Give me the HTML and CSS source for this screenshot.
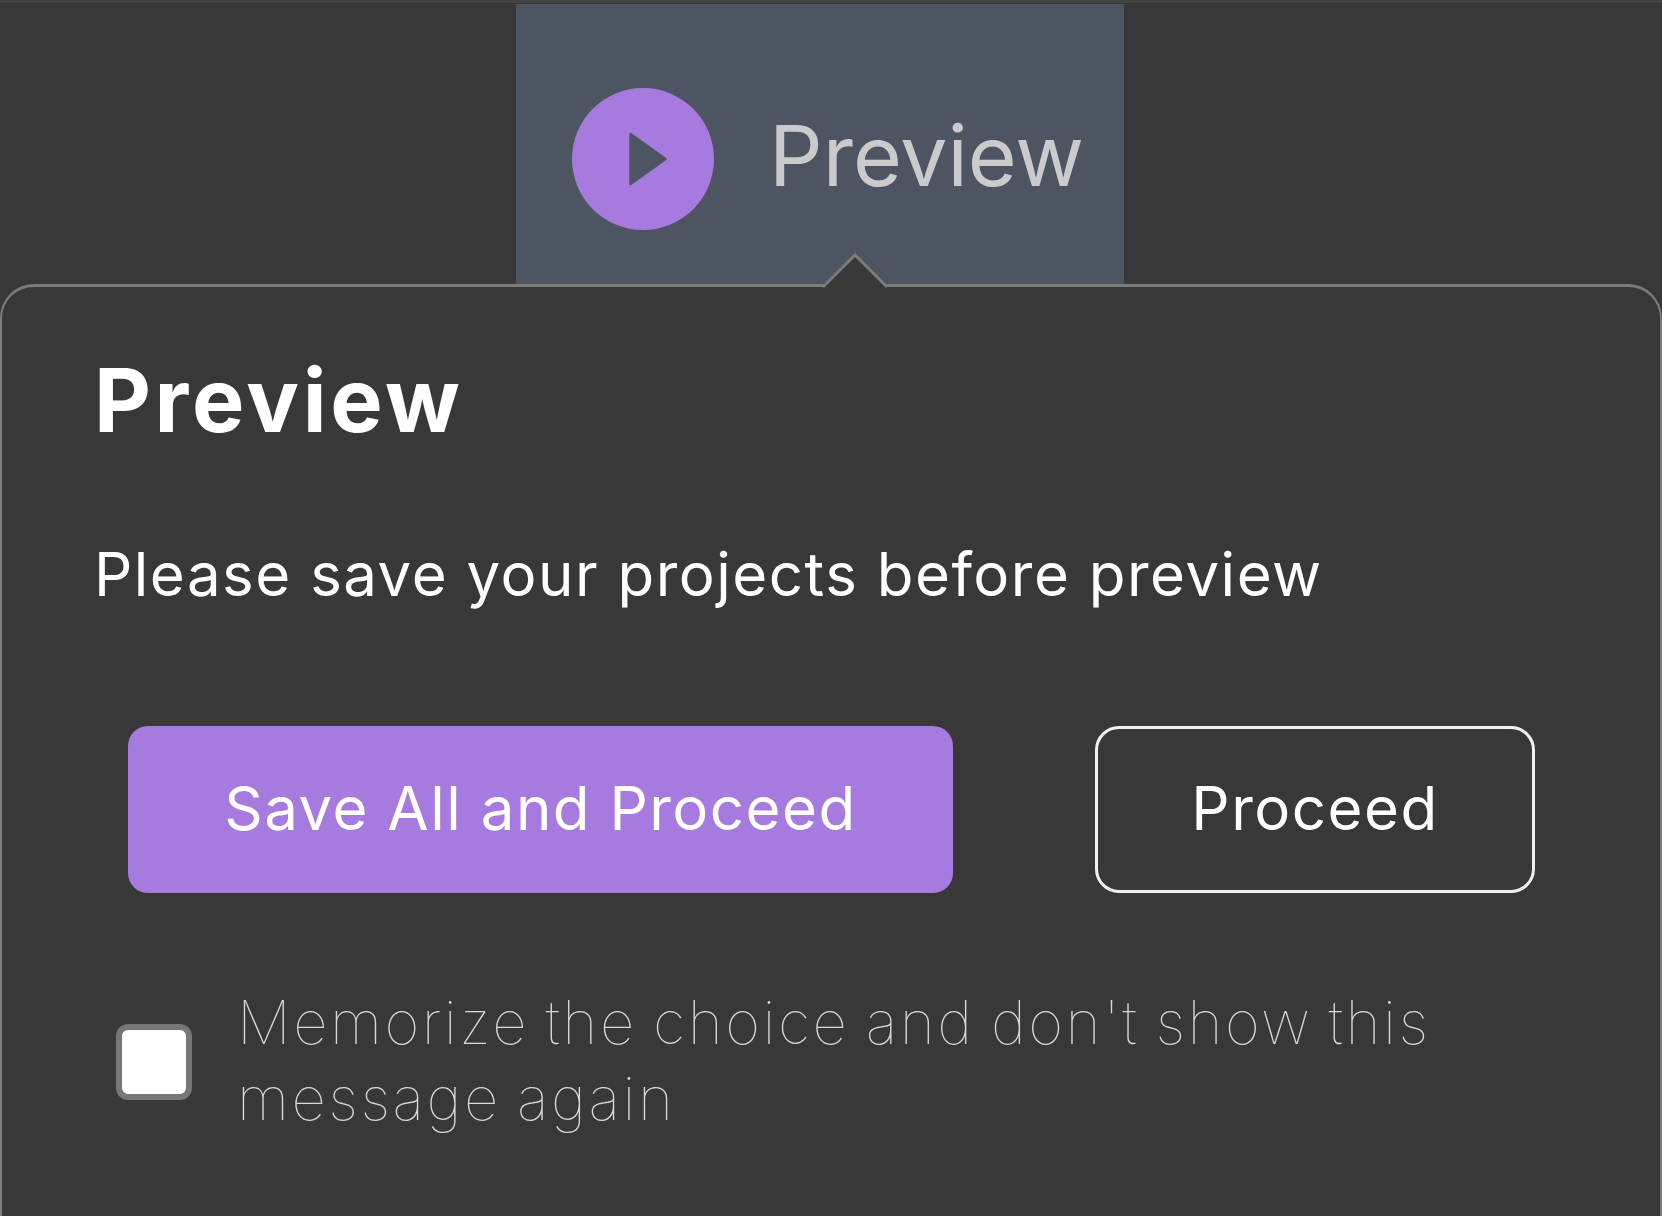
FILE: index.html
```html
<!DOCTYPE html>
<html lang="en">
<head>
<meta charset="utf-8">
<title>Preview</title>
<link rel="stylesheet" href="styles.css">
</head>
<body>
<div class="topline"></div>
<header class="toolbar">
  <div class="tab">
    <span class="play">
      <svg viewBox="0 0 38 54" width="38" height="54"><path d="M1.5 2 L36.5 27 L1.5 52 Z" fill="#4d5563" stroke="#4d5563" stroke-width="2.5" stroke-linejoin="round"/></svg>
    </span>
    <span class="tab-label">Preview</span>
  </div>
</header>
<section class="popup">
  <svg class="arrow" viewBox="0 0 64 38" width="64" height="38"><path d="M1 33 L32 2 L63 33 L63 38 L1 38 Z" fill="#383838"/><path d="M0 34 L32 2 L64 34" fill="none" stroke="#7b7b7b" stroke-width="3"/></svg>
  <h1 class="title">Preview</h1>
  <p class="message">Please save your projects before preview</p>
  <div class="actions">
    <button class="btn btn-primary">Save All and Proceed</button>
    <button class="btn btn-outline">Proceed</button>
  </div>
  <label class="remember">
    <span class="check"></span>
    <span class="remember-text">Memorize the choice and don't show this message again</span>
  </label>
</section>
</body>
</html>
```
FILE: styles.css
```css
* { box-sizing: border-box; }
html, body { margin: 0; height: 100%; }
body {
  background: #383838;
  font-family: "Inter", "Liberation Sans", sans-serif;
  overflow: hidden;
  color: #fff;
}
.topline { height: 4px; background: #444; border-bottom: 1px solid #333; }
.toolbar { display: flex; height: 280px; padding-left: 516px; }
.tab {
  width: 608px;
  background: #4d5563;
  display: flex;
  align-items: center;
  padding: 30px 0 0 56px;
  gap: 55px;
}
.play {
  width: 142px;
  height: 142px;
  border-radius: 50%;
  background: #a67adf;
  display: flex;
  align-items: center;
  justify-content: center;
  padding-left: 9px;
  flex: none;
}
.tab-label { font-size: 84px; font-weight: 380; color: #cbcbcb; padding-bottom: 8px; }
.popup {
  position: relative;
  height: 960px;
  background: #383838;
  border: 2px solid #7b7b7b;
  border-top-width: 3px;
  border-bottom: 0;
  border-radius: 34px 34px 0 0;
  padding: 63px 92px 0;
}
.arrow { position: absolute; left: 821px; top: -34px; }
.title { margin: 0; font-size: 88px; font-weight: 700; line-height: 100px; letter-spacing: 3.6px; }
.message { margin: 0; padding-top: 84px; font-size: 60px; font-weight: 400; line-height: 80px; letter-spacing: 1.5px; white-space: nowrap; }
.actions { display: flex; padding: 112px 0 0 34px; gap: 142px; }
.btn {
  height: 167px;
  font: 400 60px "Inter", "Liberation Sans", sans-serif;
  letter-spacing: 1.5px;
  color: #fff;
  padding: 0 0 4px;
}
.btn-primary { width: 825px; background: #a67adf; border: 0; border-radius: 20px; }
.btn-outline { width: 440px; background: transparent; border: 3px solid #f0f0f0; border-radius: 24px; }
.remember { display: flex; align-items: center; gap: 45px; padding: 91px 0 0 22px; }
.check {
  width: 76px;
  height: 76px;
  flex: none;
  background: #fff;
  border: 6px solid #777;
  border-radius: 12px;
}
.remember-text { width: 1240px; padding-bottom: 4px; font-size: 60px; font-weight: 100; line-height: 76px; letter-spacing: 2.5px; word-spacing: -3px; color: #d8d8d8; }
```
